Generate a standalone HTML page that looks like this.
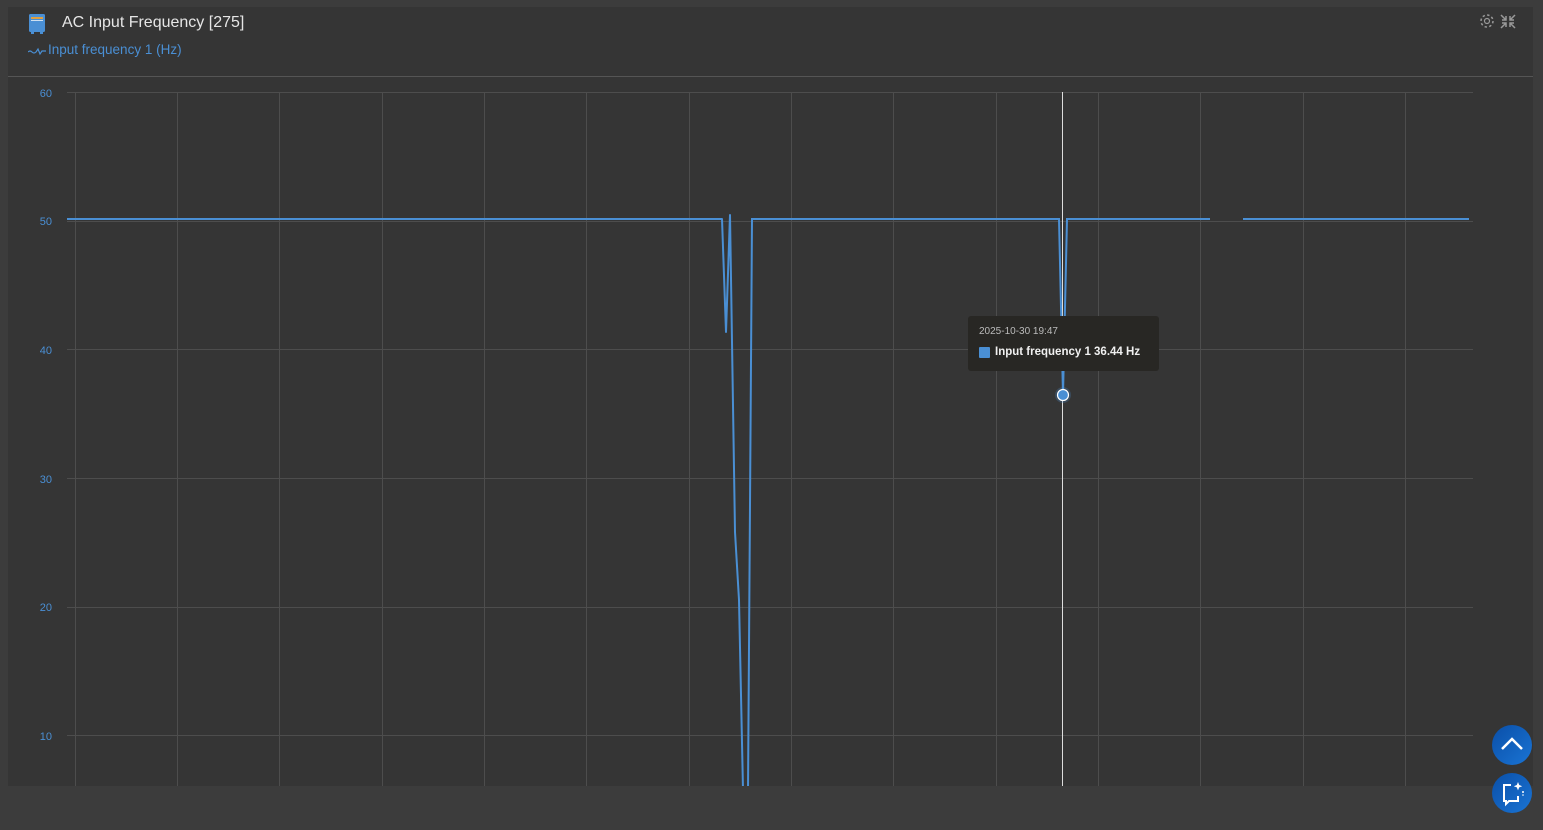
<!DOCTYPE html>
<html><head><style>
html,body{margin:0;padding:0;background:#3c3c3c;width:1543px;height:830px;overflow:hidden;font-family:"Liberation Sans",sans-serif}
.panel{position:absolute;left:8px;top:7px;width:1525px;height:779px;background:#353535}
.title{position:absolute;left:54px;top:7px;color:#e6e6e6;font-size:16px}
.leg{position:absolute;left:40px;top:35px;color:#4a8fd4;font-size:13.5px}
.sep{position:absolute;left:0;top:69px;width:1525px;height:1px;background:#555}
.btn{position:absolute;width:40px;height:40px;border-radius:50%;background:linear-gradient(135deg,#0a4fa8,#1a74d4)}
</style></head><body>
<div class="panel">
<svg style="position:absolute;left:20px;top:6px" width="20" height="22" viewBox="0 0 20 22"><rect x="1" y="1" width="16" height="18" rx="1.5" fill="#4a8fd4"/><rect x="3" y="4" width="12" height="2" fill="#e0a040"/><rect x="3" y="7" width="12" height="1" fill="#cfe0f0"/><rect x="3" y="19" width="3" height="2" fill="#4a8fd4"/><rect x="12" y="19" width="3" height="2" fill="#4a8fd4"/></svg>
<div class="title">AC Input Frequency [275]</div>
<svg style="position:absolute;left:20px;top:39px" width="18" height="10" viewBox="0 0 18 10"><path d="M0 6q2-2 4 0t4 0l2-3 2 5 2-3h4" stroke="#4a8fd4" stroke-width="1.2" fill="none"/></svg>
<div class="leg">Input frequency 1 (Hz)</div>
<div class="sep"></div>
<svg style="position:absolute;left:1470px;top:5px" width="50" height="20" viewBox="0 0 50 20"><circle cx="9" cy="9" r="2.5" fill="none" stroke="#999" stroke-width="1.2"/><circle cx="9" cy="9" r="6" fill="none" stroke="#999" stroke-width="1.5" stroke-dasharray="2.4 2.3"/><path d="M23 3l5 5M28 4v4h-4M37 3l-5 5M32 4v4h4M23 16l5-5M28 15v-4h-4M37 16l-5-5M32 15v-4h4" stroke="#999" stroke-width="1.5" fill="none"/></svg>
</div>
<svg style="position:absolute;left:0;top:0" width="1543" height="786">
<g stroke="#4d4d4d" stroke-width="1">
<line x1="67" y1="92.5" x2="1473" y2="92.5"/><line x1="67" y1="221.5" x2="1473" y2="221.5"/><line x1="67" y1="349.5" x2="1473" y2="349.5"/><line x1="67" y1="478.5" x2="1473" y2="478.5"/><line x1="67" y1="607.5" x2="1473" y2="607.5"/><line x1="67" y1="735.5" x2="1473" y2="735.5"/>
<g>
<line x1="75.5" y1="92" x2="75.5" y2="786"/><line x1="177.5" y1="92" x2="177.5" y2="786"/><line x1="279.5" y1="92" x2="279.5" y2="786"/><line x1="382.5" y1="92" x2="382.5" y2="786"/><line x1="484.5" y1="92" x2="484.5" y2="786"/><line x1="586.5" y1="92" x2="586.5" y2="786"/><line x1="689.5" y1="92" x2="689.5" y2="786"/><line x1="791.5" y1="92" x2="791.5" y2="786"/><line x1="893.5" y1="92" x2="893.5" y2="786"/><line x1="996.5" y1="92" x2="996.5" y2="786"/><line x1="1098.5" y1="92" x2="1098.5" y2="786"/><line x1="1200.5" y1="92" x2="1200.5" y2="786"/><line x1="1303.5" y1="92" x2="1303.5" y2="786"/><line x1="1405.5" y1="92" x2="1405.5" y2="786"/>
</g></g>
<g fill="#4a8fd4" font-size="11" text-anchor="end">
<text x="52" y="97">60</text><text x="52" y="225">50</text><text x="52" y="354">40</text><text x="52" y="483">30</text><text x="52" y="611">20</text><text x="52" y="740">10</text></g>
<line x1="1062.5" y1="92" x2="1062.5" y2="786" stroke="#ddd" stroke-width="1"/>
<polyline fill="none" stroke="#4a8fd4" stroke-width="2" stroke-linejoin="round" points="67,219 722,219 726,332 730,215 735,532 739,600 743,790"/>
<polyline fill="none" stroke="#4a8fd4" stroke-width="2" points="748,790 752,219 1059,219 1063,395 1067,219 1210,219"/>
<line x1="1243" y1="219" x2="1469" y2="219" stroke="#4a8fd4" stroke-width="2"/>
<circle cx="1063" cy="395" r="8" fill="#4a8fd4" opacity="0.25"/>
<circle cx="1063" cy="395" r="5.5" fill="#4a8fd4" stroke="#fff" stroke-width="1.2"/>
</svg>
<div style="position:absolute;left:968px;top:316px;width:191px;height:55px;background:#282724;border-radius:3px">
<div style="position:absolute;left:11px;top:10px;color:#bbb;font-size:10px">2025-10-30 19:47</div>
<div style="position:absolute;left:11px;top:31px;width:11px;height:11px;background:#4a8fd4;border-radius:1px"></div>
<div style="position:absolute;left:27px;top:30px;color:#f0f0f0;font-size:11.5px;font-weight:bold">Input frequency 1 36.44 Hz</div>
</div>
<div class="btn" style="left:1492px;top:725px"><svg width="40" height="40"><path d="M10 24l10-10 10 10" stroke="#fff" stroke-width="2.5" fill="none"/></svg></div>
<div class="btn" style="left:1492px;top:773px"><svg width="40" height="40"><path d="M19 12h-7v16h2v3l3-3h9v-5" stroke="#fff" stroke-width="2" fill="none"/><path d="M26 9l1.2 3 3 1.2-3 1.2-1.2 3-1.2-3-3-1.2 3-1.2z" fill="#fff"/><circle cx="31" cy="19" r="1" fill="#fff"/><circle cx="31" cy="22" r="0.8" fill="#fff"/></svg></div>
</body></html>
